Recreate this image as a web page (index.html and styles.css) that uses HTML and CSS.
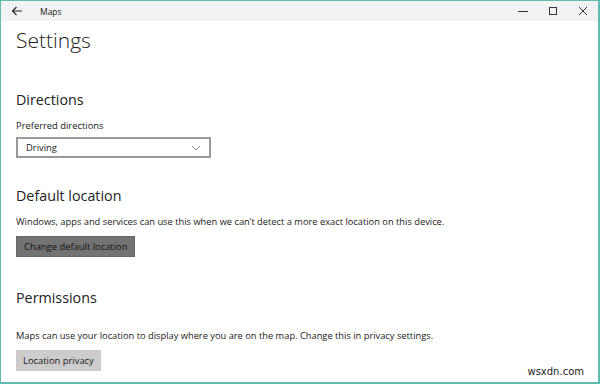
FILE: index.html
```html
<!DOCTYPE html>
<html lang="en">
<head>
    <meta charset="UTF-8">
    <title>Maps - Settings</title>
    <link rel="stylesheet" href="styles.css">
</head>
<body>
    <div class="window">
        <div class="titlebar">
            <div class="title-left">
                <svg class="back" width="12" height="10" viewBox="0 0 12 10">
                    <path d="M11 5H1.5M5.5 1L1.5 5l4 4" fill="none" stroke="#222" stroke-width="1.1"/>
                </svg>
                <span class="app-name">Maps</span>
            </div>
            <div class="controls">
                <svg width="10" height="10" viewBox="0 0 10 10"><path d="M0 5.5h10" stroke="#333" stroke-width="1"/></svg>
                <svg width="10" height="10" viewBox="0 0 10 10"><rect x="1.5" y="1.5" width="7" height="7" fill="none" stroke="#333" stroke-width="1"/></svg>
                <svg width="10" height="10" viewBox="0 0 10 10"><path d="M1 1l8 8M9 1l-8 8" stroke="#333" stroke-width="1"/></svg>
            </div>
        </div>

        <div class="content">
            <h1 class="page-title">Settings</h1>

            <section class="section">
                <h2>Directions</h2>
                <label class="field-label">Preferred directions</label>
                <div class="select">
                    <span>Driving</span>
                    <svg width="10" height="6" viewBox="0 0 10 6"><path d="M1 1l4 4 4-4" fill="none" stroke="#888" stroke-width="1"/></svg>
                </div>
            </section>

            <section class="section">
                <h2>Default location</h2>
                <p class="desc">Windows, apps and services can use this when we can’t detect a more exact location on this device.</p>
                <button class="btn dark">Change default location</button>
            </section>

            <section class="section">
                <h2>Permissions</h2>
                <p class="desc spaced">Maps can use your location to display where you are on the map. Change this in privacy settings.</p>
                <button class="btn">Location privacy</button>
            </section>
        </div>

        <div class="watermark">wsxdn.com</div>
    </div>
</body>
</html>
```

FILE: styles.css
```css
* {
    box-sizing: border-box;
}

body {
    margin: 0;
    font-family: "Open Sans", "Noto Sans", sans-serif;
    color: #1a1a1a;
}

.window {
    position: relative;
    width: 600px;
    height: 384px;
    border: 1px solid #5fbcae;
    border-right-width: 2px;
    border-bottom-width: 2px;
    background: #fff;
    overflow: hidden;
}

.titlebar {
    height: 20px;
    background: #f2f2f2;
    display: flex;
    justify-content: space-between;
    align-items: center;
}

.title-left {
    display: flex;
    align-items: center;
}

.back {
    margin-left: 10px;
    margin-right: 17px;
}

.app-name {
    font-size: 8.5px;
    color: #222;
}

.controls {
    display: flex;
    gap: 20px;
    margin-right: 10px;
}

.content {
    padding: 0 15px;
}

.page-title {
    margin: 4px 0 0;
    font-size: 21px;
    font-weight: 300;
    line-height: 30px;
    color: #222;
}

.section {
    display: flex;
    flex-direction: column;
    align-items: flex-start;
}

.section h2 {
    margin: 0;
    font-size: 14.3px;
    font-weight: 400;
    line-height: 20px;
    color: #222;
}

.section:nth-of-type(1) {
    margin-top: 35px;
}

.section + .section {
    margin-top: 28px;
}

.section:nth-of-type(3) {
    margin-top: 31px;
}

.field-label {
    margin-top: 10px;
    font-size: 9.4px;
    line-height: 12px;
}

.select {
    margin-top: 5px;
    width: 195px;
    height: 21px;
    border: 2px solid #999;
    padding: 0 8px;
    display: flex;
    justify-content: space-between;
    align-items: center;
    font-size: 9.4px;
}

.desc {
    margin: 10px 0 0;
    font-size: 9.3px;
    line-height: 12px;
}

.desc.spaced {
    margin-top: 22px;
}

.btn {
    margin-top: 8px;
    height: 21px;
    padding: 0 7px;
    border: 0;
    background: #cccccc;
    font-family: inherit;
    font-size: 9.4px;
    color: #1a1a1a;
}

.btn.dark {
    background: #737373;
    border: 1px solid #666;
    color: #111;
}

.watermark {
    position: absolute;
    right: 14px;
    bottom: 5px;
    font-family: "DejaVu Sans", sans-serif;
    font-size: 10px;
    color: #222;
}
```
